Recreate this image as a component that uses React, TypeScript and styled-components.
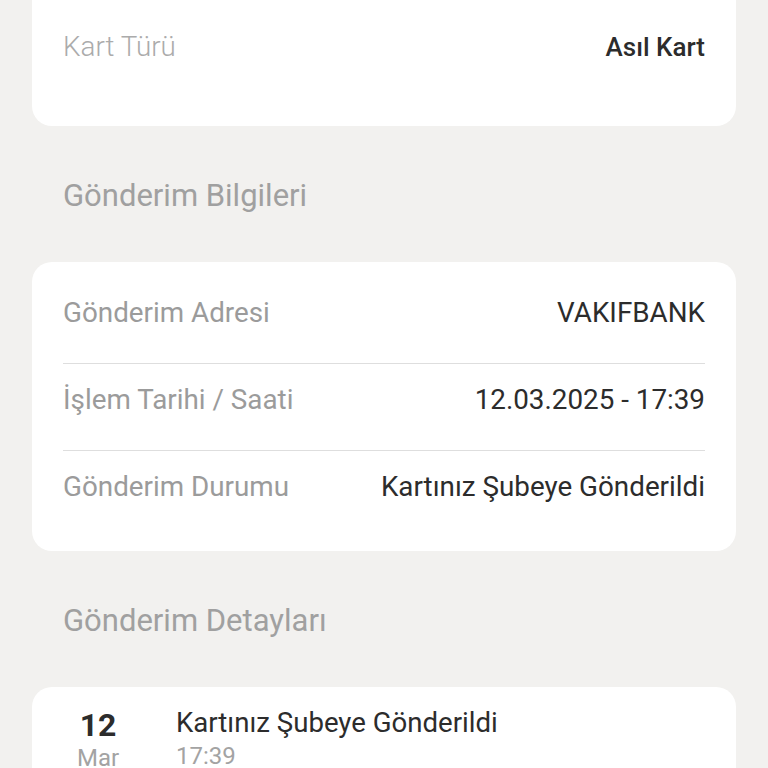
import React from "react";
import styled, { createGlobalStyle } from "styled-components";

const Global = createGlobalStyle`
  html, body { margin: 0; padding: 0; background: #f2f1ef; }
  body { font-family: Roboto, "Noto Sans", Arial, sans-serif; -webkit-font-smoothing: antialiased; }
  #root { width: 768px; height: 768px; overflow: hidden; }
`;

const Page = styled.div`
  display: flex;
  flex-direction: column;
  padding: 0 32px;
  background: #f2f1ef;
  min-height: 768px;
`;

const Card = styled.div<{ $pt?: number; $pb?: number }>`
  background: #ffffff;
  border-radius: 20px;
  padding: ${(p) => p.$pt ?? 15}px 31px ${(p) => p.$pb ?? 14}px;
  display: flex;
  flex-direction: column;
`;

const TopCard = styled(Card)`
  border-top-left-radius: 0;
  border-top-right-radius: 0;
`;

const Row = styled.div`
  display: flex;
  justify-content: space-between;
  align-items: center;
  padding: 23px 0 37px;
  line-height: 26px;
  font-size: 27.8px;
`;

const Divider = styled.div`
  height: 1px;
  background: #dedede;
`;

const Label = styled.span<{ $light?: boolean }>`
  color: ${(p) => (p.$light ? "#ababab" : "#9b9b9b")};
  font-weight: ${(p) => (p.$light ? 300 : 400)};
`;

const Value = styled.span<{ $bold?: boolean }>`
  color: #2c2c2c;
  font-weight: ${(p) => (p.$bold ? 500 : 400)};
  font-size: ${(p) => (p.$bold ? "26px" : "inherit")};
`;

const SectionTitle = styled.div`
  font-size: 31px;
  line-height: 26px;
  color: #a0a0a0;
  padding: 57px 31px 53px;
`;

const TimelineItem = styled.div`
  display: flex;
  align-items: flex-start;
  padding-top: 21px;
`;

const DateCol = styled.div`
  width: 70px;
  display: flex;
  flex-direction: column;
  align-items: center;
  margin-right: 43px;
`;

const Day = styled.div`
  font-size: 32px;
  font-weight: 700;
  color: #2c2c2c;
  line-height: 34px;
`;

const Month = styled.div`
  font-size: 24px;
  color: #a3a3a3;
  line-height: 32px;
`;

const InfoCol = styled.div`
  display: flex;
  flex-direction: column;
  margin-top: -2px;
`;

const EventTitle = styled.div`
  font-size: 27.6px;
  color: #2c2c2c;
  line-height: 34px;
`;

const EventTime = styled.div`
  font-size: 24px;
  color: #a3a3a3;
  line-height: 32px;
`;

const TimelineCard = styled(Card)`
  padding: 0 31px 60px 31px;
  border-bottom-left-radius: 0;
  border-bottom-right-radius: 0;
`;

export default function App() {
  return (
    <>
      <Global />
      <Page>
        <TopCard $pt={11} $pb={29}>
          <Row>
            <Label $light>Kart Türü</Label>
            <Value $bold>Asıl Kart</Value>
          </Row>
        </TopCard>

        <SectionTitle>Gönderim Bilgileri</SectionTitle>

        <Card>
          <Row>
            <Label>Gönderim Adresi</Label>
            <Value>VAKIFBANK</Value>
          </Row>
          <Divider />
          <Row>
            <Label>İşlem Tarihi / Saati</Label>
            <Value>12.03.2025 - 17:39</Value>
          </Row>
          <Divider />
          <Row>
            <Label>Gönderim Durumu</Label>
            <Value>Kartınız Şubeye Gönderildi</Value>
          </Row>
        </Card>

        <SectionTitle>Gönderim Detayları</SectionTitle>

        <TimelineCard>
          <TimelineItem>
            <DateCol>
              <Day>12</Day>
              <Month>Mar</Month>
            </DateCol>
            <InfoCol>
              <EventTitle>Kartınız Şubeye Gönderildi</EventTitle>
              <EventTime>17:39</EventTime>
            </InfoCol>
          </TimelineItem>
        </TimelineCard>
      </Page>
    </>
  );
}
